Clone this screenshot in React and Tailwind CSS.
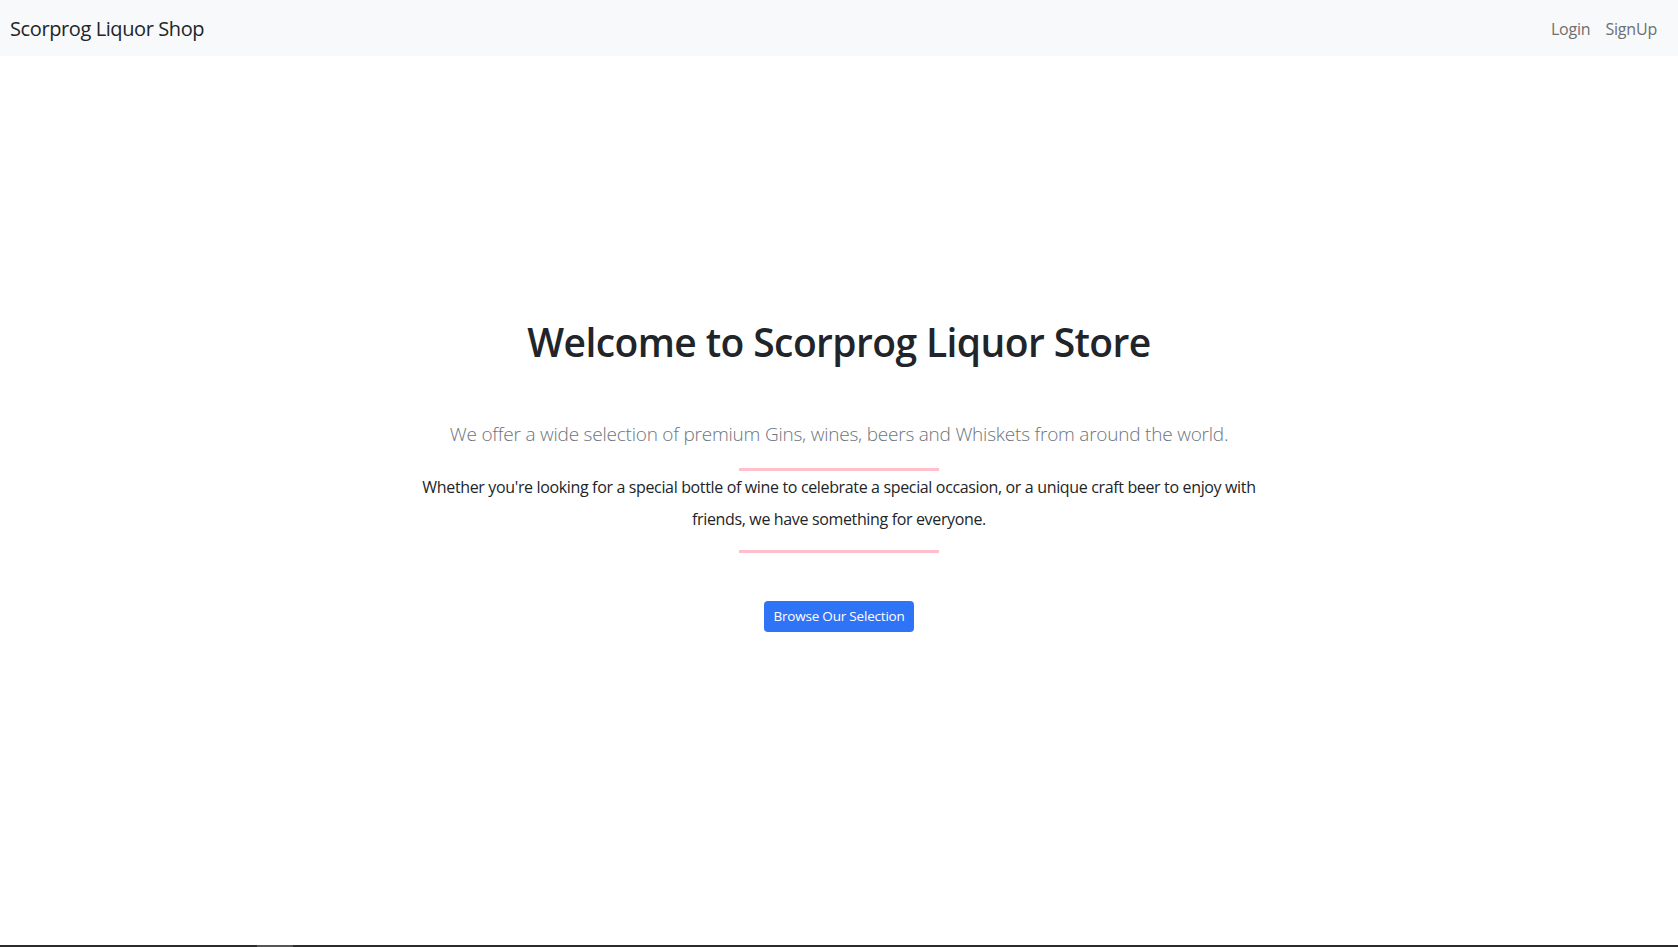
export default function App() {
  return (
    <div className="flex h-[947px] flex-col bg-white font-['Open_Sans',sans-serif]">
      <nav className="flex h-14 shrink-0 items-center justify-between bg-[#f8f9fa] pl-[10px] pr-[21px] pt-[2px]">
        <span className="text-[20px] leading-[30px] tracking-[-0.4px] text-[#212529]">Scorprog Liquor Shop</span>
        <div className="flex gap-[15px] text-[16px] tracking-[-0.2px] text-[#6c6f73]">
          <span>Login</span>
          <span>SignUp</span>
        </div>
      </nav>
      <main className="flex flex-col items-center pt-[262px] text-center">
        <h1 className="text-[39px] font-semibold leading-[48px] tracking-[-0.6px] text-[#212529]">Welcome to Scorprog Liquor Store</h1>
        <p className="mt-[53px] text-[19px] font-light leading-[30px] tracking-[-0.22px] text-[#6c757d]">
          We offer a wide selection of premium Gins, wines, beers and Whiskets from around the world.
        </p>
        <div className="mt-[19px] h-[3px] w-[200px] bg-[#ffc0cb]" />
        <p className="text-[16px] leading-[32px] tracking-[-0.35px] text-[#212529]">
          Whether you're looking for a special bottle of wine to celebrate a special occasion, or a unique craft beer to enjoy with
          <br />
          friends, we have something for everyone.
        </p>
        <div className="mt-[15px] h-[3px] w-[200px] bg-[#ffc0cb]" />
        <button className="mt-[48px] h-[31px] rounded-[4px] bg-[#2f74f7] px-[9px] text-[13.5px] tracking-[-0.2px] text-white">
          Browse Our Selection
        </button>
      </main>
      <div className="mt-auto flex h-[2px] shrink-0 bg-[#2b2b2b]">
        <div className="ml-[257px] h-full w-[36px] bg-[#555555]" />
      </div>
    </div>
  );
}
